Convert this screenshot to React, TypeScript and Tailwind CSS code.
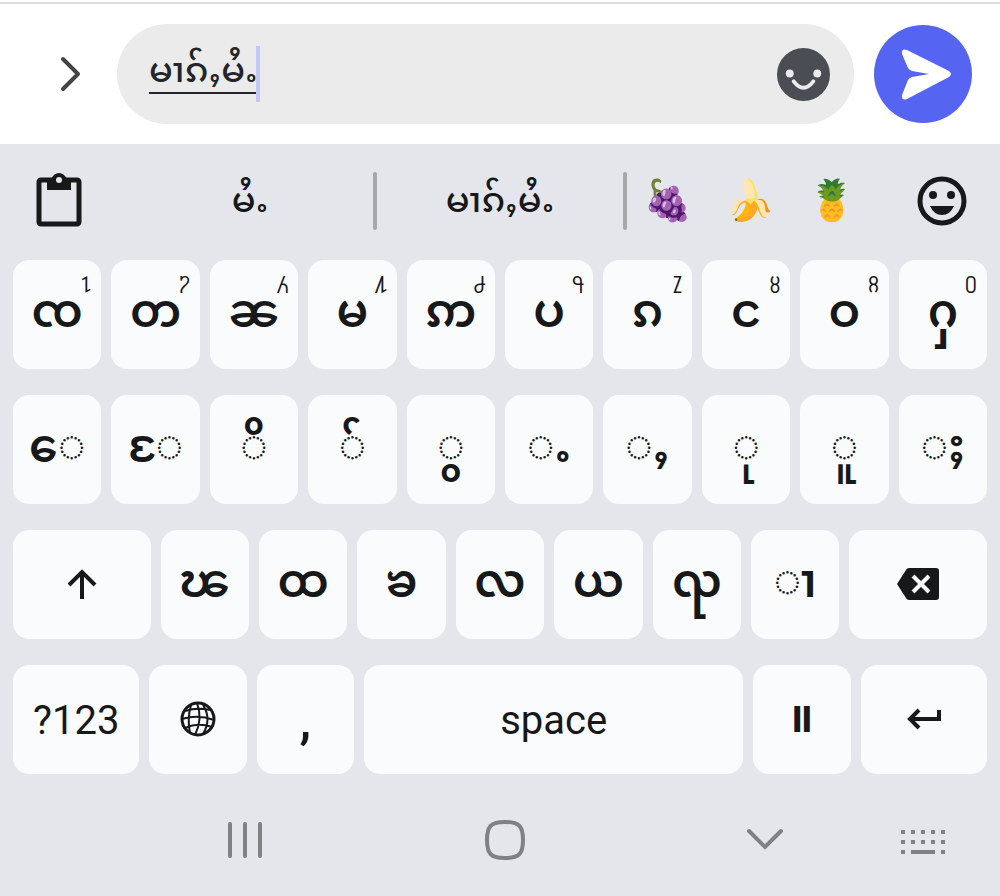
import React from 'react';
import clsx from 'clsx';

const sans = "font-['Roboto','Noto_Sans','Noto_Sans_Myanmar','Padauk',sans-serif]";

const topRow = [
  { label: 'ၸ', hint: '႑' },
  { label: 'တ', hint: '႒' },
  { label: 'ၼ', hint: '႓' },
  { label: 'မ', hint: '႔' },
  { label: 'ဢ', hint: '႕' },
  { label: 'ပ', hint: '႖' },
  { label: 'ၵ', hint: '႗' },
  { label: 'င', hint: '႘' },
  { label: 'ဝ', hint: '႙' },
  { label: 'ႁ', hint: '႐' },
];

// Combining marks are shown on a dotted circle
const markRow = ['◌ေ', '◌ႄ', '◌ိ', '◌်', '◌ွ', '◌ႉ', '◌ႇ', '◌ု', '◌ူ', '◌ႈ'];

const bottomRow = ['ၽ', 'ထ', 'ၶ', 'လ', 'ယ', 'ၺ', '◌ၢ'];

type KeyProps = {
  children: React.ReactNode;
  className?: string;
  name?: string;
  hint?: string;
};

const Key: React.FC<KeyProps> = ({ children, className = 'grow-9', name, hint }) => (
  <button
    type="button"
    aria-label={name}
    className={clsx(
      'relative flex h-[109px] min-w-0 basis-0 items-center justify-center rounded-2xl bg-[#fafbfd] pb-0.5 text-[#17181a]',
      className,
    )}
  >
    {hint && <span className="absolute top-2 right-2.5 text-base leading-6 font-medium">{hint}</span>}
    {children}
  </button>
);

const Row: React.FC<{ children: React.ReactNode }> = ({ children }) => (
  <div className="flex gap-[10px]">{children}</div>
);

const Letter: React.FC<{ children: React.ReactNode }> = ({ children }) => (
  <span className="pb-1.5 text-[46px] leading-[60px] font-semibold whitespace-nowrap">{children}</span>
);

const MessageBar = () => (
  <header className="bg-white pt-0.5">
    <div className="flex items-center border-t-2 border-[#dcdfe0] pt-5 pr-7 pb-5">
      <button type="button" aria-label="Show actions" className="flex w-[117px] justify-center pl-6">
        <svg viewBox="0 0 24 36" className="h-9 w-6" fill="none" stroke="#424448" strokeWidth="4" strokeLinecap="round" strokeLinejoin="round">
          <path d="M4 3 L19 18 L4 33" />
        </svg>
      </button>
      <div className="flex h-[100px] min-w-0 grow items-center rounded-full bg-[#ebebeb] pr-6 pl-8">
        <input
          aria-label="Message"
          defaultValue="မၢၵ်ႇမႆႉ"
          className="h-20 w-[107px] bg-transparent text-[35px] leading-[76px] font-medium text-[#242528] underline decoration-2 underline-offset-[10px] outline-none [text-decoration-skip-ink:none]"
        />
        <span className="h-14 w-1 bg-[#c3c8f6]" />
        <button type="button" aria-label="Emoji" className="ml-auto">
          <svg viewBox="0 0 54 54" className="size-[53px]">
            <circle cx="27" cy="27" r="27" fill="#4b4d54" />
            <circle cx="13" cy="26" r="4" fill="#ebebeb" />
            <circle cx="41" cy="26" r="4" fill="#ebebeb" />
            <path d="M17 34 Q27 47 37 34" fill="none" stroke="#ebebeb" strokeWidth="4" strokeLinecap="round" />
          </svg>
        </button>
      </div>
      <button type="button" aria-label="Send" className="ml-5 flex size-[98px] shrink-0 items-center justify-center rounded-full bg-[#5664f2]">
        <svg viewBox="0 0 98 98" className="size-[98px]">
          <path
            d="M33 25 L75 46 Q79 49 75 52 L33 74 Q27 76 28 70 L34 55 Q35 53 38 52 L55 49 L38 46 Q35 45 34 43 L28 29 Q27 23 33 25 Z"
            fill="#fff"
          />
        </svg>
      </button>
    </div>
  </header>
);

const SuggestionBar = () => (
  <div className="flex h-[116px] items-center pb-0.5 text-[#17181a]">
    <button type="button" aria-label="Clipboard" className="flex w-[127px] shrink-0 pl-9">
      <svg viewBox="0 0 46 56" className="h-14 w-[46px]">
        <rect x="3" y="7" width="40" height="44" rx="2" fill="none" stroke="currentColor" strokeWidth="5" />
        <path d="M11 6 H15 Q18 0 23 0 Q28 0 31 6 H35 V17 H11 Z" fill="currentColor" />
        <circle cx="23" cy="7" r="3" fill="#e5e6eb" />
      </svg>
    </button>
    <button type="button" className="grow basis-0 text-[35px] font-medium">မႆႉ</button>
    <span className="h-[58px] w-1 rounded-sm bg-[#a6a7aa]" />
    <button type="button" className="grow basis-0 text-[35px] font-medium">မၢၵ်ႇမႆႉ</button>
    <span className="h-[58px] w-1 rounded-sm bg-[#a6a7aa]" />
    <div className="flex w-[246px] shrink-0 justify-around text-[40px]">
      <button type="button">🍇</button>
      <button type="button">🍌</button>
      <button type="button">🍍</button>
    </div>
    <button type="button" aria-label="Emoji keyboard" className="mr-[33px] ml-11 shrink-0">
      <svg viewBox="0 0 50 50" className="size-[50px]">
        <circle cx="25" cy="25" r="22" fill="none" stroke="currentColor" strokeWidth="5" />
        <circle cx="16" cy="19" r="4" fill="currentColor" />
        <circle cx="34" cy="19" r="4" fill="currentColor" />
        <path d="M13 30 H37 Q33 39 25 39 Q17 39 13 30 Z" fill="currentColor" />
      </svg>
    </button>
  </div>
);

const Keyboard = () => (
  <div className="flex flex-col gap-[26px] px-[13px]">
    <Row>
      {topRow.map(({ label, hint }) => (
        <Key key={label} hint={hint}>
          <Letter>{label}</Letter>
        </Key>
      ))}
    </Row>
    <Row>
      {markRow.map(mark => (
        <Key key={mark}>
          <Letter>{mark}</Letter>
        </Key>
      ))}
    </Row>
    <Row>
      <Key className="grow-14" name="Shift">
        <svg viewBox="0 0 30 30" className="size-[30px]" fill="none" stroke="currentColor" strokeWidth="4">
          <path d="M15 30 V3 M2 16 L15 3 L28 16" />
        </svg>
      </Key>
      {bottomRow.map(label => (
        <Key key={label}>
          <Letter>{label}</Letter>
        </Key>
      ))}
      <Key className="grow-14" name="Backspace">
        <svg viewBox="0 0 44 34" className="h-[34px] w-11">
          <path d="M13 1 H40 Q43 1 43 4 V30 Q43 33 40 33 H13 Q11 33 10 31 L1 17 L10 3 Q11 1 13 1 Z" fill="currentColor" />
          <path d="M17 9 L33 25 M33 9 L17 25" stroke="#fafbfd" strokeWidth="4" />
        </svg>
      </Key>
    </Row>
    <Row>
      <Key className="grow-13">
        <span className="pt-1 text-[40px]">?123</span>
      </Key>
      <Key className="grow-10" name="Switch language">
        <svg viewBox="0 0 36 36" className="size-9" fill="none" stroke="currentColor" strokeWidth="2">
          <circle cx="18" cy="18" r="16" strokeWidth="3" />
          <path d="M17 2 Q23 18 15 34 M11 4 Q7 18 10 32 M23 4 Q32 18 23 33 M5 10 Q18 6 30 9 M2 18 Q18 13 34 19 M5 27 Q18 21 32 26" />
        </svg>
      </Key>
      <Key className="grow-10">
        <span className="pt-1 text-[52px] font-medium">,</span>
      </Key>
      <Key className="grow-39">
        <span className="pt-1 text-[40px]">space</span>
      </Key>
      <Key className="grow-10">
        <Letter>။</Letter>
      </Key>
      <Key className="grow-13" name="Enter">
        <svg viewBox="0 0 36 22" className="h-[22px] w-9" fill="none" stroke="currentColor" strokeWidth="4">
          <path d="M33 2 V11 H4 M13 2 L4 11 L13 20" />
        </svg>
      </Key>
    </Row>
  </div>
);

const NavigationBar = () => (
  <nav className="flex h-[122px] items-center pt-[10px] pl-[115px] text-[#808184]">
    <button type="button" aria-label="Recent apps" className="flex w-[260px] justify-center">
      <svg viewBox="0 0 36 38" className="h-[38px] w-9" stroke="currentColor" strokeWidth="4" strokeLinecap="round">
        <path d="M3 3 V35 M18 3 V35 M33 3 V35" />
      </svg>
    </button>
    <button type="button" aria-label="Home" className="flex w-[260px] justify-center">
      <svg viewBox="0 0 40 40" className="size-10" fill="none" stroke="currentColor" strokeWidth="4">
        <path d="M20 2 C34 2 38 6 38 20 C38 34 34 38 20 38 C6 38 2 34 2 20 C2 6 6 2 20 2 Z" />
      </svg>
    </button>
    <button type="button" aria-label="Hide keyboard" className="flex w-[260px] justify-center">
      <svg viewBox="0 0 38 24" className="h-6 w-[38px]" fill="none" stroke="currentColor" strokeWidth="4" strokeLinecap="round">
        <path d="M3 3 L19 19 L35 3" />
      </svg>
    </button>
    <button type="button" aria-label="Change keyboard" className="flex w-14 justify-center pt-1">
      <svg viewBox="0 0 44 26" className="h-[26px] w-11" fill="none" stroke="currentColor" strokeWidth="4">
        <path d="M0 3 H44 M0 13 H44" strokeDasharray="4 6" />
        <path d="M0 23 H4 M10 23 H34 M40 23 H44" />
      </svg>
    </button>
  </nav>
);

export default function App() {
  return (
    <main className={clsx('min-h-screen bg-[#e5e6eb]', sans)}>
      <MessageBar />
      <SuggestionBar />
      <Keyboard />
      <NavigationBar />
    </main>
  );
}
